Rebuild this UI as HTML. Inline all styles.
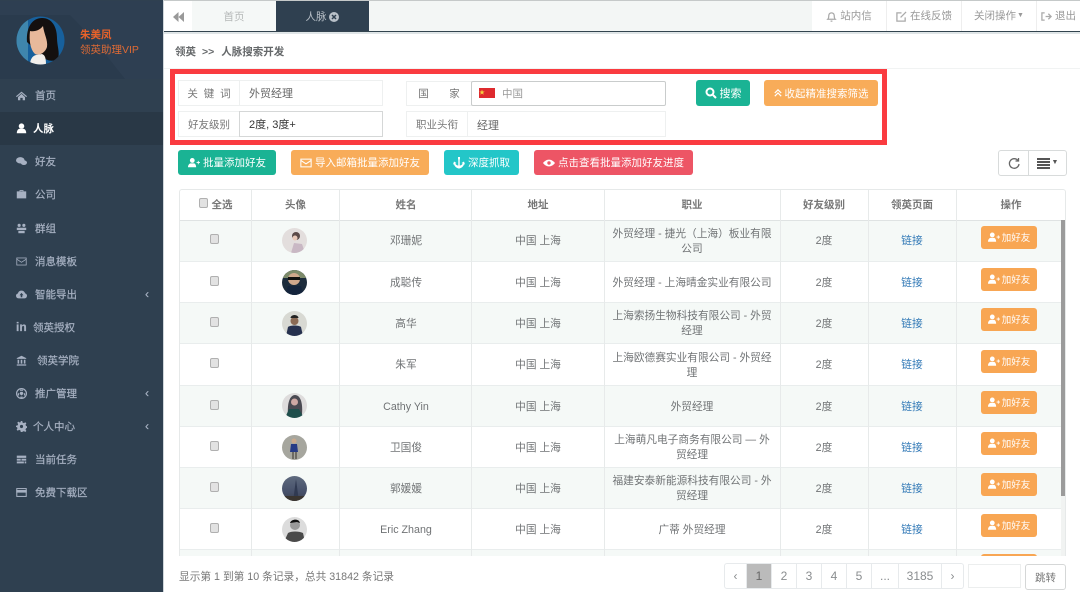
<!DOCTYPE html>
<html lang="zh"><head><meta charset="utf-8"><title>领英</title>
<style>
*{box-sizing:border-box}
html,body{margin:0;padding:0}
html{background:#fff;overflow:hidden}
body{width:1080px;height:592px;overflow:hidden;position:relative;background:#fff;font:12px/1.2 "Liberation Sans","Noto Sans CJK SC",sans-serif;color:#676a6c;filter:blur(.35px)}
.a{position:absolute}
.c{display:flex;align-items:center;justify-content:center;white-space:nowrap}
#side{left:0;top:0;width:163px;height:592px;background:#2f4050}
#prof{left:0;top:1px;width:163px;height:78px;background:#2a3b4d}
.m{position:absolute;left:0;width:163px;height:33px;color:#a7b1c2;font-weight:400;font-size:10.5px;-webkit-text-stroke:.2px #a7b1c2}
.m svg{position:absolute;left:16px;top:11px;width:11px;height:11px;fill:#a7b1c2}
.m span{position:absolute;left:35px;top:11px}
.m i{position:absolute;left:145px;top:9px;font-style:normal;font-size:12px}
.btn{position:absolute;color:#fff;border-radius:3px;font-size:10.5px;height:25px;padding-top:1px}
.btn svg{width:12px;height:12px;fill:#fff;margin-right:3px;flex:none}
.lbl{position:absolute;background:#fff;border:1px solid #eef0f0;color:#777;font-size:10.5px;padding-top:2px}
.inp{position:absolute;background:#fff;border:1px solid #eef0f0;color:#666;font-size:11px;padding-left:9px;padding-top:3px;display:flex;align-items:center}
#tbl{left:179px;top:189px;width:887px;height:367px;overflow:hidden;border:1px solid #e6e9e9;border-bottom:0;border-radius:3px 3px 0 0}
.v{position:absolute;top:0;width:1px;height:367px;background:#e7eaea}
.h{position:absolute;top:0;height:30px;font-size:10.5px;font-weight:700;color:#777}
.r{position:absolute;left:0;width:886px;border-top:1px solid #e9eded}
.r.o{background:#f5f9f7}
.r.e{background:#fff}
.t{position:absolute;top:0;height:100%;font-size:10.7px;color:#707375;text-align:center;display:flex;align-items:center;justify-content:center;padding-top:2px;white-space:nowrap;line-height:15px}
.cb{position:absolute;left:30px;width:9px;height:10px;border:1px solid #b0b0b0;background:#e2e2e2;border-radius:2px}
.add{position:absolute;left:801px;width:56px;height:23px;background:#f8a653;border-radius:3px;color:#fff;font-size:9.5px;padding-top:2px}
.add svg{width:12px;height:11px;fill:#fff;margin-right:2px;margin-top:-2px}
.av{position:absolute;left:102px;width:25px;height:25px;border-radius:50%;overflow:hidden}
.pg{position:absolute;top:563px;height:26px;border:1px solid #e7eaec;border-left:0;font-size:12px;color:#8a8d8f;padding-top:1px}
.top{position:absolute;top:1px;height:30px;font-size:10.5px;color:#999;border-left:1px solid #eeeeee;padding-top:1px}
.top svg{width:11px;height:11px;fill:none;stroke:#aaa;stroke-width:1.4;margin-right:3px}
</style></head><body>
<div class="a" style="left:0;top:0;width:1080px;height:1px;background:#c5c9c9"></div>

<div id="side" class="a">
<div id="prof" class="a"></div>
<svg class="a" style="left:0;top:1px" width="163" height="78"><path d="M95 40 125 78H163V0H0V14H70z" fill="#2e3f52"/></svg>
<svg class="a" style="left:16px;top:16px" width="49" height="49" viewBox="0 0 49 49">
<defs><clipPath id="pc"><circle cx="24.500" cy="24.500" r="24"/></clipPath></defs>
<g clip-path="url(#pc)"><rect width="49" height="49" fill="#17609c"/><rect width="12" height="49" fill="#3f86ad"/>
<path d="M11 26C10 10 17 2 26 2c10 0 15 9 15 20 0 8 3 14 1 21-5 3-11 2-15-2z" fill="#14100f"/>
<path d="M14 15c5 1 10-1 13-5 1 8 5 14 4 21-2 6-8 9-12 7-5-5-6-14-5-23z" fill="#e8b99b"/>
<path d="M14 49c0-5 2-9 6-10l6-1c3 1 4 4 4 11z" fill="#f2efec"/></g></svg>
<div class="a" style="left:80px;top:29px;color:#e8622a;font-size:10.500px;font-weight:700">朱美凤</div>
<div class="a" style="left:80px;top:44px;color:#dd6a35;font-size:10.500px">领英助理VIP</div>

<div class="m" style="top:79px"><svg viewBox="0 0 14 14"><path d="M7 2 0 8l1 1 6-5 6 5 1-1zM2.500 9l4.500-4 4.500 4v4H8.500V10h-3v3H2.500z"/></svg><span>首页</span></div>
<div class="m" style="top:112px;background:#293846;color:#fff;font-weight:700;-webkit-text-stroke:0"><svg viewBox="0 0 14 14" style="fill:#fff"><circle cx="7" cy="4" r="3.500"/><path d="M1 13c0-4 2-5.500 3.500-5.500h5C11 7.500 13 9 13 13z"/></svg><span style="left:33px">人脉</span></div>
<div class="m" style="top:145px"><svg viewBox="0 0 14 14"><ellipse cx="5.500" cy="5.500" rx="5.500" ry="4"/><ellipse cx="10" cy="8.500" rx="4" ry="3"/></svg><span>好友</span></div>
<div class="m" style="top:178px"><svg viewBox="0 0 14 14"><path d="M4.500 3V1.500h5V3H13v9H1V3zM5.500 3h3V2.500h-3zM1 7h12v1H1z"/></svg><span>公司</span></div>
<div class="m" style="top:212px"><svg viewBox="0 0 14 14"><circle cx="4" cy="3" r="2"/><circle cx="10" cy="3" r="2"/><path d="M1 6h12v3H1z"/><path d="M3 10h8v3H3z"/></svg><span>群组</span></div>
<div class="m" style="top:245px"><svg viewBox="0 0 14 14" style="fill:none;stroke:#a7b1c2"><rect x="1" y="2.500" width="12" height="9"/><path d="M1 4l6 4 6-4"/></svg><span>消息模板</span></div>
<div class="m" style="top:278px"><svg viewBox="0 0 14 14"><path d="M3.500 12C1 12 0 10 0 8.500 0 7 1 6 2.500 5.500 3 3 5 2 7 2c2.500 0 4 1.500 4.500 3.500 1.500.3 2.500 1.500 2.500 3S13 12 11 12z"/><path d="M7 5 4.500 8H6v2.500h2V8h1.500z" fill="#2f4050"/></svg><span>智能导出</span><i>‹</i></div>
<div class="m" style="top:311px"><span style="left:16px;font-weight:700;font-family:'Liberation Sans',sans-serif;font-size:12px;top:9px">in</span><span style="left:33px">领英授权</span></div>
<div class="m" style="top:344px"><svg viewBox="0 0 14 14"><path d="M7 1 1 4v1h12V4zM2 6h2v5H2zM6 6h2v5H6zM10 6h2v5h-2zM1 12h12v1.500H1z"/></svg><span style="left:37px">领英学院</span></div>
<div class="m" style="top:377px"><svg viewBox="0 0 14 14"><path fill-rule="evenodd" d="M7 0a7 7 0 1 0 0 14A7 7 0 0 0 7 0zm0 1.500a5.500 5.500 0 1 1 0 11 5.500 5.500 0 0 1 0-11z"/><path d="M5.500 5h3l1 2.500L7 9.500 4.500 7.500zM5 2h4v1.500H5zM2 7.500l1.500-1.500.5 3-1 1zM12 7.500 10.500 6 10 9l1 1zM5.500 11h3v1.500h-3z"/></svg><span>推广管理</span><i>‹</i></div>
<div class="m" style="top:410px"><svg viewBox="0 0 14 14"><path fill-rule="evenodd" d="M6 0h2l.4 2 1.700.7L11.800 1.600l1.400 1.400-1.100 1.700.7 1.700 2 .4v2l-2 .4-.7 1.700 1.100 1.700-1.400 1.400-1.700-1.100-1.700.7L8 14H6l-.4-2-1.700-.7-1.700 1.100L.8 11l1.100-1.700L1.200 7.600 0 8V6l2-.4.700-1.700L1.600 2.200 3 .8l1.700 1.100L6 1.500zM7 5a2 2 0 1 0 0 4 2 2 0 0 0 0-4z"/></svg><span style="left:33px">个人中心</span><i>‹</i></div>
<div class="m" style="top:443px"><svg viewBox="0 0 14 14"><path d="M1 2h12v3H1zM1 6h5v2.500H1zM7 6h6v2.500H7zM1 9.500h9V12H1zM11 9.500h2V12h-2z"/></svg><span>当前任务</span></div>
<div class="m" style="top:476px"><svg viewBox="0 0 14 14" style="fill:none;stroke:#a7b1c2;stroke-width:1.300"><rect x="1" y="2" width="12" height="10"/><rect x="1" y="4.500" width="12" height="2" fill="#a7b1c2"/></svg><span>免费下载区</span></div>
</div>
<div class="a" style="left:163px;top:0;width:1px;height:592px;background:#cfd6da"></div>

<!-- top bar -->
<div class="a" style="left:164px;top:1px;width:916px;height:30px;background:#f3f6f5"></div>
<div class="a c" style="left:164px;top:1px;width:28px;height:30px;background:#fff;padding-top:1px"><svg width="11" height="10" viewBox="0 0 11 10" fill="#999"><path d="M5.500 0v10L0 5zM11 0v10L5.500 5z"/></svg></div>
<div class="a c" style="left:192px;top:1px;width:84px;height:30px;background:#f5f8f7;color:#b5b8b8;font-size:10.500px;padding-top:2px">首页</div>
<div class="a c" style="left:276px;top:1px;width:93px;height:30px;background:#2f4050;color:#b8c0c8;font-size:10.500px;padding-top:2px">人脉&nbsp;<svg width="10" height="10" viewBox="0 0 10 10"><circle cx="5" cy="5" r="5" fill="#b8c0c8"/><path d="M3 3l4 4M7 3l-4 4" stroke="#2f4050" stroke-width="1.500"/></svg></div>
<div class="a" style="left:812px;top:1px;width:268px;height:30px;background:#fff"></div>
<div class="top c" style="left:812px;width:74px;border-left:0"><svg viewBox="0 0 12 12"><path d="M2 9c1-1 1-2 1-4a3 3 0 0 1 6 0c0 2 0 3 1 4zM5 11h2"/></svg>站内信</div>
<div class="top c" style="left:886px;width:75px"><svg viewBox="0 0 12 12"><path d="M10 7v4H1V2h5M5 7l6-6"/></svg>在线反馈</div>
<div class="top c" style="left:961px;width:75px">关闭操作<span style="font-size:7px;margin-left:1px">▼</span></div>
<div class="top c" style="left:1036px;width:44px"><svg viewBox="0 0 12 12"><path d="M4 2H1v8h3M5 6h6M8 3l3 3-3 3"/></svg>退出</div>
<div class="a" style="left:164px;top:31px;width:916px;height:1px;background:#33444f"></div>
<div class="a" style="left:164px;top:32px;width:916px;height:2px;background:#dfe5e7"></div>

<!-- breadcrumb -->
<div class="a" style="left:175px;top:46px;font-size:10.500px;font-weight:700;color:#65686a;white-space:pre">领英<span style="margin:0 7px 0 6px">&gt;&gt;</span>人脉搜索开发</div>
<div class="a" style="left:164px;top:68px;width:916px;height:1px;background:#f1f3f3"></div>

<!-- search -->
<div class="a" style="left:170px;top:69px;width:717px;height:76px;border:5px solid #fa3b40"></div>
<div class="lbl c" style="left:178px;top:80px;width:62px;height:26px;white-space:pre;font-size:10.500px">关  键  词</div>
<div class="inp" style="left:239px;top:80px;width:144px;height:26px">外贸经理</div>
<div class="lbl c" style="left:178px;top:111px;width:62px;height:26px">好友级别</div>
<div class="inp" style="left:239px;top:111px;width:144px;height:26px;border-color:#d5d7d7;color:#333">2度, 3度+</div>
<div class="lbl c" style="left:406px;top:81px;width:66px;height:25px;white-space:pre">国       家</div>
<div class="inp" style="left:471px;top:81px;width:195px;height:25px;border-color:#c9cccc;padding-left:30px;padding-top:1px;color:#999;border-radius:2px;font-size:10.500px">中国</div>
<svg class="a" style="left:479px;top:88px" width="16" height="10" viewBox="0 0 16 10"><rect width="16" height="10" fill="#de2a2e"/><path d="M3 1.500l.7 2h2l-1.600 1.200.6 2-1.700-1.200-1.700 1.200.6-2L.3 3.500h2z" fill="#f5d33f"/></svg>
<div class="lbl c" style="left:406px;top:111px;width:62px;height:26px">职业头衔</div>
<div class="inp" style="left:467px;top:111px;width:199px;height:26px;padding-top:5px">经理</div>
<div class="btn c" style="left:696px;top:80px;width:54px;height:26px;background:#1ab394;font-size:11px;padding-top:3px"><svg viewBox="0 0 12 12" style="fill:none;stroke:#fff;stroke-width:2;margin-top:-3px"><circle cx="5" cy="5" r="3.500"/><path d="M8 8l3 3"/></svg>搜索</div>
<div class="btn c" style="left:764px;top:80px;width:114px;height:26px;background:#f8ac59;padding-top:3px"><svg viewBox="0 0 10 10" style="width:8px;height:8px;fill:none;stroke:#fff;stroke-width:1.500;margin-top:-3px"><path d="M1 5l4-4 4 4M1 9l4-4 4 4"/></svg>收起精准搜索筛选</div>

<!-- actions -->
<div class="btn c" style="left:178px;top:150px;width:98px;background:#1ab394;padding-top:2px"><svg viewBox="0 0 14 12" style="margin-top:-2px"><circle cx="5" cy="3" r="2.800"/><path d="M0 11c0-3 2-4.500 3-4.500h4c1 0 2.500 1.500 2.500 4.500zM10 5h1.500V3.500h1V5H14v1h-1.500v1.500h-1V6H10z"/></svg>批量添加好友</div>
<div class="btn c" style="left:291px;top:150px;width:138px;background:#f8ac59;padding-top:2px"><svg viewBox="0 0 14 12" style="fill:none;stroke:#fff;stroke-width:1.200;margin-top:-2px"><rect x="1" y="1.500" width="12" height="9"/><path d="M1 3l6 4 6-4"/></svg>导入邮箱批量添加好友</div>
<div class="btn c" style="left:444px;top:150px;width:75px;background:#23c6c8;padding-top:2px"><svg viewBox="0 0 12 12" style="margin-top:-2px"><path d="M5 0h2v1.500L6.700 3v5.500c1.500 0 2.500-1 3-2L8.500 6l2.500-1.500L12 7.500l-1-.3C10.300 9.500 8.500 11 6 11.500 3.500 11 1.700 9.500 1 7.200L0 7.500 1 4.500 3.500 6l-1.200.5c.5 1 1.500 2 3 2V3L5 1.500z"/></svg>深度抓取</div>
<div class="btn c" style="left:534px;top:150px;width:159px;background:#ed5565;padding-top:2px"><svg viewBox="0 0 14 12" style="margin-top:-2px"><path fill-rule="evenodd" d="M7 2c3 0 5.500 2 7 4-1.500 2-4 4-7 4S1.500 8 0 6c1.500-2 4-4 7-4zm0 2a2 2 0 1 0 0 4 2 2 0 0 0 0-4z"/></svg>点击查看批量添加好友进度</div>
<div class="a c" style="left:998px;top:150px;width:31px;height:26px;border:1px solid #d8dbdb;border-radius:3px 0 0 3px"><svg width="12" height="13" viewBox="0 0 12 13" fill="none" stroke="#666" stroke-width="1.300"><path d="M10 3.500A4.800 4.800 0 1 0 11 7"/><path d="M10.500 1v3h-3" /></svg></div>
<div class="a c" style="left:1028px;top:150px;width:39px;height:26px;border:1px solid #d8dbdb;border-radius:0 3px 3px 0"><svg width="13" height="11" viewBox="0 0 13 11" fill="#555"><path d="M0 0h13v2H0zM0 3h13v2H0zM0 6h13v2H0zM0 9h13v2H0z"/></svg><span style="font-size:7px;color:#555;margin-left:2px">▼</span></div>

<!-- table -->
<div id="tbl" class="a">
<div class="h c" style="left:0;width:71px"><span class="cb" style="position:static;margin-right:4px;margin-top:-4px"></span>全选</div>
<div class="h c" style="left:71px;width:89px">头像</div>
<div class="h c" style="left:160px;width:132px">姓名</div>
<div class="h c" style="left:292px;width:132px">地址</div>
<div class="h c" style="left:424px;width:176px">职业</div>
<div class="h c" style="left:600px;width:88px">好友级别</div>
<div class="h c" style="left:688px;width:88px">领英页面</div>
<div class="h c" style="left:776px;width:110px">操作</div>

<div class="r o" style="top:30px;height:41px;border-top:1px solid #dfe3e3"><span class="cb" style="top:13px"></span><div class="av" style="top:7px;background:#e3dedd"><svg width="25" height="25"><path d="M9 25l3-10 8 1 3 9z" fill="#c9b8c4"/><circle cx="14" cy="8" r="4" fill="#5b4a48"/><circle cx="13" cy="10" r="2.500" fill="#e8c8b8"/></svg></div><div class="t" style="left:160px;width:132px;padding-top:1px">邓珊妮</div><div class="t" style="left:292px;width:132px;padding-top:1px">中国 上海</div><div class="t" style="left:424px;width:176px;padding-top:1px">外贸经理 - 捷光（上海）板业有限<br>公司</div><div class="t" style="left:600px;width:88px;padding-top:1px">2度</div><div class="t" style="left:688px;width:88px;color:#337ab7;padding-top:1px">链接</div><div class="add c" style="top:5px"><svg viewBox="0 0 14 12"><circle cx="5" cy="3" r="2.800"/><path d="M0 11c0-3 2-4.500 3-4.500h4c1 0 2.500 1.500 2.500 4.500zM10 5h1.500V3.500h1V5H14v1h-1.500v1.500h-1V6H10z"/></svg>加好友</div></div>

<div class="r e" style="top:71px;height:41px"><span class="cb" style="top:14px"></span><div class="av" style="top:8px;background:#1d2c3c"><svg width="25" height="25"><rect y="0" width="25" height="8" fill="#7d8a6a"/><circle cx="12" cy="9" r="6" fill="#d0a88c"/><rect x="6" y="7" width="12" height="3" fill="#111"/><path d="M3 25l3-9h13l3 9z" fill="#14243c"/></svg></div><div class="t" style="left:160px;width:132px">成聪传</div><div class="t" style="left:292px;width:132px">中国 上海</div><div class="t" style="left:424px;width:176px">外贸经理 - 上海晴金实业有限公司</div><div class="t" style="left:600px;width:88px">2度</div><div class="t" style="left:688px;width:88px;color:#337ab7">链接</div><div class="add c" style="top:6px"><svg viewBox="0 0 14 12"><circle cx="5" cy="3" r="2.800"/><path d="M0 11c0-3 2-4.500 3-4.500h4c1 0 2.500 1.500 2.500 4.500zM10 5h1.500V3.500h1V5H14v1h-1.500v1.500h-1V6H10z"/></svg>加好友</div></div>

<div class="r o" style="top:112px;height:41px"><span class="cb" style="top:14px"></span><div class="av" style="top:8px;background:#d8d9d3"><svg width="25" height="25"><circle cx="12.500" cy="10" r="4" fill="#8a6a55"/><path d="M12.500 4a4 3 0 0 0-4 3h8a4 3 0 0 0-4-3z" fill="#222"/><path d="M4 25l2-9c2-2 11-2 13 0l2 9z" fill="#26314f"/></svg></div><div class="t" style="left:160px;width:132px">高华</div><div class="t" style="left:292px;width:132px">中国 上海</div><div class="t" style="left:424px;width:176px">上海索扬生物科技有限公司 - 外贸<br>经理</div><div class="t" style="left:600px;width:88px">2度</div><div class="t" style="left:688px;width:88px;color:#337ab7">链接</div><div class="add c" style="top:5px"><svg viewBox="0 0 14 12"><circle cx="5" cy="3" r="2.800"/><path d="M0 11c0-3 2-4.500 3-4.500h4c1 0 2.500 1.500 2.500 4.500zM10 5h1.500V3.500h1V5H14v1h-1.500v1.500h-1V6H10z"/></svg>加好友</div></div>

<div class="r e" style="top:153px;height:42px"><span class="cb" style="top:14px"></span><div class="t" style="left:160px;width:132px">朱军</div><div class="t" style="left:292px;width:132px">中国 上海</div><div class="t" style="left:424px;width:176px">上海欧德赛实业有限公司 - 外贸经<br>理</div><div class="t" style="left:600px;width:88px">2度</div><div class="t" style="left:688px;width:88px;color:#337ab7">链接</div><div class="add c" style="top:6px"><svg viewBox="0 0 14 12"><circle cx="5" cy="3" r="2.800"/><path d="M0 11c0-3 2-4.500 3-4.500h4c1 0 2.500 1.500 2.500 4.500zM10 5h1.500V3.500h1V5H14v1h-1.500v1.500h-1V6H10z"/></svg>加好友</div></div>

<div class="r o" style="top:195px;height:41px"><span class="cb" style="top:14px"></span><div class="av" style="top:7px;background:#dedcdc"><svg width="25" height="25"><path d="M6 22C5 10 8 2 13 2s8 7 7 19z" fill="#4a4a52"/><circle cx="12.500" cy="9" r="3.500" fill="#cfa9a4"/><path d="M3 25l4-9h10l5 9z" fill="#1f4f4c"/></svg></div><div class="t" style="left:160px;width:132px">Cathy Yin</div><div class="t" style="left:292px;width:132px">中国 上海</div><div class="t" style="left:424px;width:176px">外贸经理</div><div class="t" style="left:600px;width:88px">2度</div><div class="t" style="left:688px;width:88px;color:#337ab7">链接</div><div class="add c" style="top:5px"><svg viewBox="0 0 14 12"><circle cx="5" cy="3" r="2.800"/><path d="M0 11c0-3 2-4.500 3-4.500h4c1 0 2.500 1.500 2.500 4.500zM10 5h1.500V3.500h1V5H14v1h-1.500v1.500h-1V6H10z"/></svg>加好友</div></div>

<div class="r e" style="top:236px;height:41px"><span class="cb" style="top:14px"></span><div class="av" style="top:8px;background:#a6a69e"><svg width="25" height="25"><circle cx="12" cy="6" r="2.500" fill="#caa98c"/><path d="M9 9h6l1 8H8z" fill="#263b86"/><path d="M10 17h2v7h-2zM13 17h2v7h-2z" fill="#6d6a63"/></svg></div><div class="t" style="left:160px;width:132px">卫国俊</div><div class="t" style="left:292px;width:132px">中国 上海</div><div class="t" style="left:424px;width:176px">上海萌凡电子商务有限公司 — 外<br>贸经理</div><div class="t" style="left:600px;width:88px">2度</div><div class="t" style="left:688px;width:88px;color:#337ab7">链接</div><div class="add c" style="top:5px"><svg viewBox="0 0 14 12"><circle cx="5" cy="3" r="2.800"/><path d="M0 11c0-3 2-4.500 3-4.500h4c1 0 2.500 1.500 2.500 4.500zM10 5h1.500V3.500h1V5H14v1h-1.500v1.500h-1V6H10z"/></svg>加好友</div></div>

<div class="r o" style="top:277px;height:41px"><span class="cb" style="top:14px"></span><div class="av" style="top:8px;background:linear-gradient(#5e6a7e,#46506a 65%,#3c3f4c)"><svg width="25" height="25"><path d="M14 3l-2.500 19h5z" fill="#303a52"/><rect y="20" width="25" height="5" fill="#3a3530"/></svg></div><div class="t" style="left:160px;width:132px">郭媛媛</div><div class="t" style="left:292px;width:132px">中国 上海</div><div class="t" style="left:424px;width:176px">福建安泰新能源科技有限公司 - 外<br>贸经理</div><div class="t" style="left:600px;width:88px">2度</div><div class="t" style="left:688px;width:88px;color:#337ab7">链接</div><div class="add c" style="top:5px"><svg viewBox="0 0 14 12"><circle cx="5" cy="3" r="2.800"/><path d="M0 11c0-3 2-4.500 3-4.500h4c1 0 2.500 1.500 2.500 4.500zM10 5h1.500V3.500h1V5H14v1h-1.500v1.500h-1V6H10z"/></svg>加好友</div></div>

<div class="r e" style="top:318px;height:41px"><span class="cb" style="top:14px"></span><div class="av" style="top:8px;background:#dcdcdc"><svg width="25" height="25"><circle cx="13" cy="8" r="5" fill="#9a9a9a"/><path d="M8 6c1-4 9-5 10 0l-3-1z" fill="#111"/><path d="M2 25l4-9c3-2 11-2 15 0l2 9z" fill="#4a4a4a"/></svg></div><div class="t" style="left:160px;width:132px">Eric Zhang</div><div class="t" style="left:292px;width:132px">中国 上海</div><div class="t" style="left:424px;width:176px">广蒂 外贸经理</div><div class="t" style="left:600px;width:88px">2度</div><div class="t" style="left:688px;width:88px;color:#337ab7">链接</div><div class="add c" style="top:5px"><svg viewBox="0 0 14 12"><circle cx="5" cy="3" r="2.800"/><path d="M0 11c0-3 2-4.500 3-4.500h4c1 0 2.500 1.500 2.500 4.500zM10 5h1.500V3.500h1V5H14v1h-1.500v1.500h-1V6H10z"/></svg>加好友</div></div>

<div class="r o" style="top:359px;height:41px"><div class="add" style="top:4px"></div></div>

<div class="v" style="left:71px"></div><div class="v" style="left:159px"></div><div class="v" style="left:291px"></div><div class="v" style="left:424px"></div><div class="v" style="left:600px"></div><div class="v" style="left:688px"></div><div class="v" style="left:776px"></div>
<div class="a" style="left:881px;top:30px;width:5px;height:337px;background:#f1f3f2"></div>
<div class="a" style="left:881px;top:30px;width:5px;height:276px;background:#9b9b9b"></div>
</div>

<!-- footer -->
<div class="a" style="left:179px;top:571px;font-size:10.700px;color:#777">显示第 1 到第 10 条记录，总共 31842 条记录</div>
<div class="pg c" style="left:724px;width:23px;border-left:1px solid #e7eaec;border-radius:3px 0 0 3px">‹</div>
<div class="pg c" style="left:747px;width:25px;background:#bbbbbb;color:#666">1</div>
<div class="pg c" style="left:772px;width:25px">2</div>
<div class="pg c" style="left:797px;width:25px">3</div>
<div class="pg c" style="left:822px;width:25px">4</div>
<div class="pg c" style="left:847px;width:25px">5</div>
<div class="pg c" style="left:872px;width:27px">...</div>
<div class="pg c" style="left:899px;width:43px">3185</div>
<div class="pg c" style="left:942px;width:22px;border-radius:0 3px 3px 0">›</div>
<div class="a" style="left:968px;top:564px;width:53px;height:24px;border:1px solid #eceeee"></div>
<div class="a c" style="left:1025px;top:564px;width:41px;height:26px;border:1px solid #d5d7d7;border-radius:3px;color:#777;font-size:10.500px;padding-top:2px">跳转</div>
</body></html>
